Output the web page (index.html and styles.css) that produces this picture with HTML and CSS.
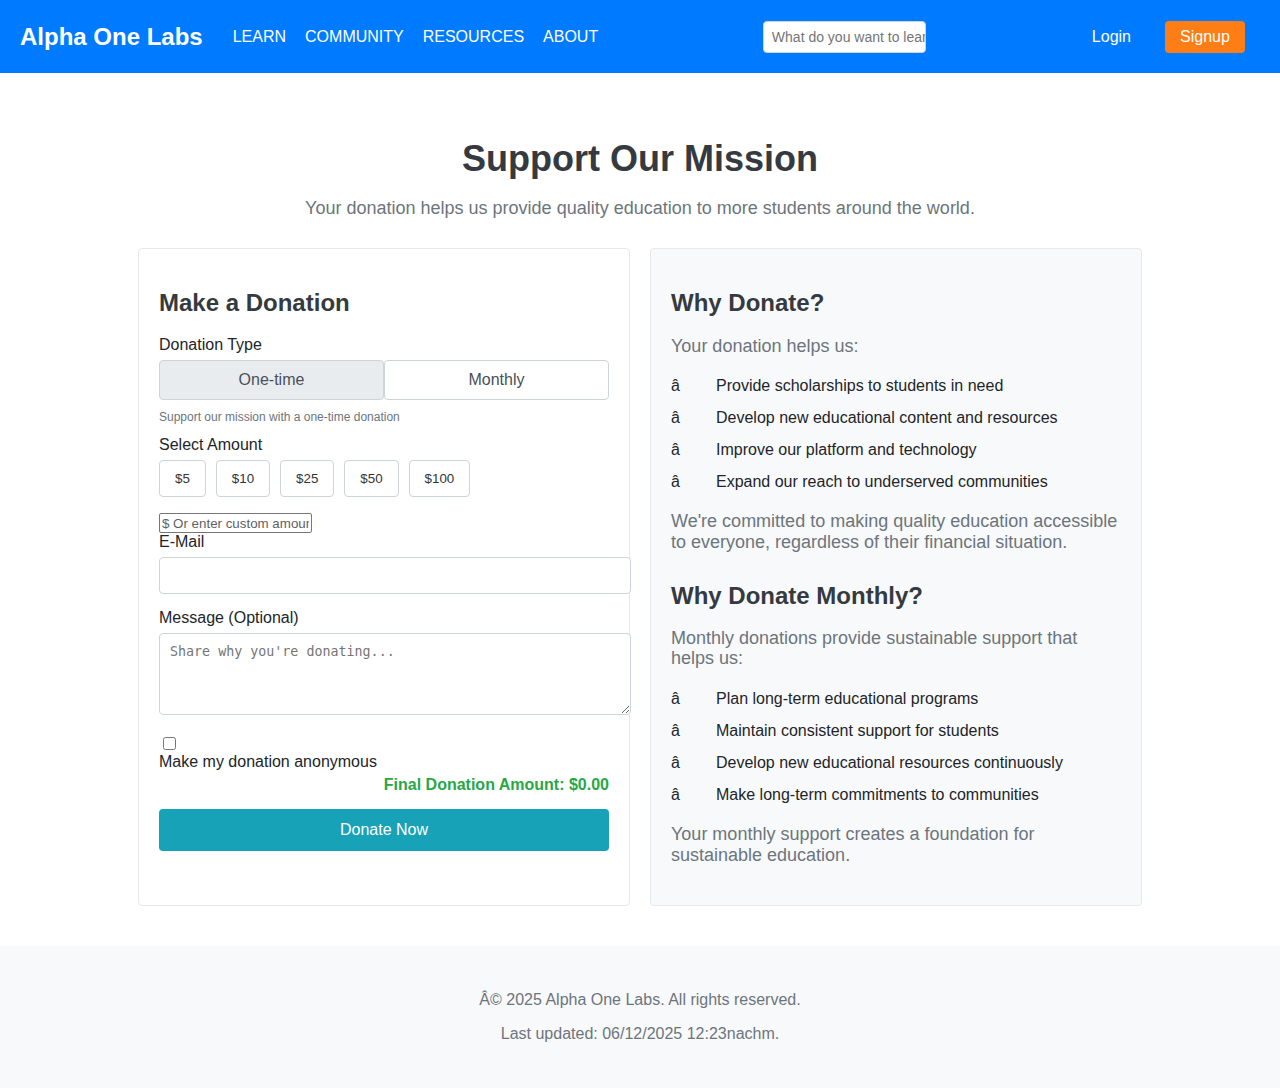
FILE: index.html
```html
<!DOCTYPE html>
<html lang="en">
<head>
<meta charset="utf-8">
<title>Support Our Mission - Alpha One Labs</title>
<link rel="stylesheet" href="styles.css">
</head>
<body>
<header class="navbar">
  <div class="nav-left">
    <a class="brand" href="#">Alpha One Labs</a>
    <nav class="nav-links">
      <a href="#">LEARN</a>
      <a href="#">COMMUNITY</a>
      <a href="#">RESOURCES</a>
      <a href="#">ABOUT</a>
    </nav>
  </div>
  <input class="nav-search" type="text" placeholder="What do you want to learn?">
  <div class="nav-auth">
    <a class="login" href="#">Login</a>
    <a class="signup" href="#">Signup</a>
  </div>
</header>

<main class="main">
  <h1 class="page-title">Support Our Mission</h1>
  <p class="page-lead">Your donation helps us provide quality education to more students around the world.</p>

  <div class="cards">
    <section class="card form-card">
      <h2 class="card-title">Make a Donation</h2>
      <label class="field-label">Donation Type</label>
      <div class="toggle">
        <button class="toggle-btn active" type="button">One-time</button>
        <button class="toggle-btn" type="button">Monthly</button>
      </div>
      <p class="help">Support our mission with a one-time donation</p>
      <label class="field-label">Select Amount</label>
      <div class="amounts">
        <button class="amount-btn" type="button">$5</button>
        <button class="amount-btn" type="button">$10</button>
        <button class="amount-btn" type="button">$25</button>
        <button class="amount-btn" type="button">$50</button>
        <button class="amount-btn" type="button">$100</button>
      </div>
      <input class="custom-amount" type="text" placeholder="$ Or enter custom amount">
      <label class="field-label">E-Mail</label>
      <input class="text-input" type="email">
      <label class="field-label">Message (Optional)</label>
      <textarea class="text-area" placeholder="Share why you're donating..."></textarea>
      <input class="anon-check" type="checkbox" id="anon">
      <label class="anon-label" for="anon">Make my donation anonymous</label>
      <p class="final-amount">Final Donation Amount: $0.00</p>
      <button class="donate-btn" type="button">Donate Now</button>
    </section>

    <section class="card info-card">
      <h2 class="card-title">Why Donate?</h2>
      <p class="info-text">Your donation helps us:</p>
      <ul class="check-list">
        <li><span class="mark">â</span>Provide scholarships to students in need</li>
        <li><span class="mark">â</span>Develop new educational content and resources</li>
        <li><span class="mark">â</span>Improve our platform and technology</li>
        <li><span class="mark">â</span>Expand our reach to underserved communities</li>
      </ul>
      <p class="info-text">We're committed to making quality education accessible to everyone, regardless of their financial situation.</p>

      <h2 class="card-title second">Why Donate Monthly?</h2>
      <p class="info-text">Monthly donations provide sustainable support that helps us:</p>
      <ul class="check-list">
        <li><span class="mark">â</span>Plan long-term educational programs</li>
        <li><span class="mark">â</span>Maintain consistent support for students</li>
        <li><span class="mark">â</span>Develop new educational resources continuously</li>
        <li><span class="mark">â</span>Make long-term commitments to communities</li>
      </ul>
      <p class="info-text last">Your monthly support creates a foundation for sustainable education.</p>
    </section>
  </div>
</main>

<footer class="footer">
  <p>Â© 2025 Alpha One Labs. All rights reserved.</p>
  <p>Last updated: 06/12/2025 12:23nachm.</p>
</footer>
</body>
</html>
```

FILE: styles.css
```css
* {
  box-sizing: content-box;
}

body {
  margin: 0;
  font-family: "Liberation Sans", Arial, sans-serif;
  color: #212529;
  background: #ffffff;
}

a {
  text-decoration: none;
}

/* Navbar */
.navbar {
  height: 73px;
  background: #007bff;
  display: flex;
  align-items: center;
  padding: 0 35px 0 20px;
}

.nav-left {
  flex: 1;
  display: flex;
  align-items: center;
}

.brand {
  color: #ffffff;
  font-size: 24px;
  font-weight: bold;
  margin-right: 30px;
}

.nav-links {
  display: flex;
  gap: 19px;
}

.nav-links a {
  color: #ffffff;
  font-size: 16px;
}

.nav-search {
  width: 153px;
  height: 30px;
  padding: 0 0 0 8px;
  margin: 0 166px 0 0;
  border: 1px solid #ced4da;
  border-radius: 4px;
  font-family: "Liberation Sans", Arial, sans-serif;
  font-size: 14px;
  background: #ffffff;
}

.nav-search::placeholder {
  color: #757575;
}

.nav-auth {
  display: flex;
  align-items: center;
}

.login {
  color: #ffffff;
  font-size: 16px;
  margin-right: 34px;
}

.signup {
  color: #ffffff;
  font-size: 16px;
  background: #fd7e14;
  border-radius: 4px;
  width: 80px;
  height: 32px;
  display: flex;
  align-items: center;
  justify-content: center;
}

/* Main */
.main {
  width: 1004px;
  margin: 0 auto;
  padding-top: 64px;
  padding-bottom: 40px;
}

.page-title {
  margin: 0;
  text-align: center;
  font-size: 36px;
  line-height: 1.2;
  color: #343a40;
}

.page-lead {
  margin: 18px 0 29px;
  text-align: center;
  font-size: 18px;
  line-height: 1.15;
  color: #6c757d;
}

.cards {
  display: grid;
  grid-template-columns: 1fr 1fr;
  gap: 20px;
}

.card {
  border: 1px solid #e6e8eb;
  border-radius: 4px;
  padding: 20px;
  display: flex;
  flex-direction: column;
  align-items: flex-start;
}

.info-card {
  background: #f8f9fa;
}

.card-title {
  margin: 20px 0 18px;
  font-size: 24px;
  line-height: 1.2;
  color: #343a40;
}

.card-title.second {
  margin: 15px 0 17px;
}

/* Form */
.field-label {
  display: block;
  font-size: 16px;
  line-height: 18px;
  margin-bottom: 6px;
  color: #212529;
}

.toggle {
  display: flex;
  width: 100%;
}

.toggle-btn {
  flex: 1;
  height: 40px;
  border: 1px solid #ced4da;
  border-radius: 4px;
  background: #ffffff;
  color: #495057;
  font-family: "Liberation Sans", Arial, sans-serif;
  font-size: 16px;
  padding: 0;
  box-sizing: border-box;
}

.toggle-btn.active {
  background: #e9ecef;
}

.help {
  margin: 11px 0 12px;
  font-size: 12px;
  line-height: 1.15;
  color: #6c757d;
}

.amounts {
  display: flex;
  gap: 10px;
  margin-bottom: 16px;
}

.amount-btn {
  height: 37px;
  padding: 0 15px;
  border: 1px solid #ced4da;
  border-radius: 4px;
  background: #ffffff;
  color: #333333;
  font-family: "Liberation Sans", Arial, sans-serif;
  font-size: 13.33px;
  box-sizing: border-box;
}

.custom-amount {
  width: 147px;
  height: 16px;
  padding: 1px 2px;
  border: 1px solid #767676;
  border-radius: 2px;
  font-family: "Liberation Sans", Arial, sans-serif;
  font-size: 13.33px;
  margin: 0;
}

.custom-amount::placeholder {
  color: #5f5f5f;
}

.text-input {
  display: block;
  width: 100%;
  height: 15px;
  padding: 10px;
  border: 1px solid #ced4da;
  border-radius: 4px;
  font-size: 14px;
  margin: 0 0 15px;
}

.text-area {
  display: block;
  width: 100%;
  height: 60px;
  padding: 10px;
  border: 1px solid #ced4da;
  border-radius: 4px;
  font-family: "DejaVu Sans Mono", monospace;
  font-size: 13.33px;
  margin: 0 0 19px;
  resize: vertical;
}

.text-area::placeholder {
  color: #757575;
}

.anon-check {
  display: block;
  width: 13px;
  height: 13px;
  margin: 3px 3px 3px 4px;
}

.anon-label {
  display: block;
  font-size: 16px;
  line-height: 18px;
}

.final-amount {
  align-self: stretch;
  margin: 5px 0 15px;
  text-align: right;
  font-size: 16px;
  line-height: 18px;
  font-weight: bold;
  color: #28a745;
}

.donate-btn {
  box-sizing: border-box;
  width: 100%;
  height: 42px;
  padding: 0;
  border: none;
  border-radius: 4px;
  background: #17a2b8;
  color: #ffffff;
  font-family: "Liberation Sans", Arial, sans-serif;
  font-size: 16px;
}

/* Info card */
.info-text {
  margin: 0 0 14px;
  font-size: 18px;
  line-height: 1.15;
  color: #6c757d;
}

.info-text.last {
  margin-bottom: 20px;
}

.check-list {
  list-style: none;
  margin: 0 0 13px;
  padding: 0;
}

.check-list li {
  display: flex;
  padding: 4px 0;
  font-size: 16px;
  line-height: 24px;
  color: #212529;
}

.mark {
  width: 45px;
  flex: none;
}

/* Footer */
.footer {
  background: #f8f9fa;
  padding: 45px 0 46px;
  text-align: center;
}

.footer p {
  margin: 0;
  font-size: 16px;
  line-height: 1.15;
  color: #6c757d;
}

.footer p + p {
  margin-top: 15px;
}
```
